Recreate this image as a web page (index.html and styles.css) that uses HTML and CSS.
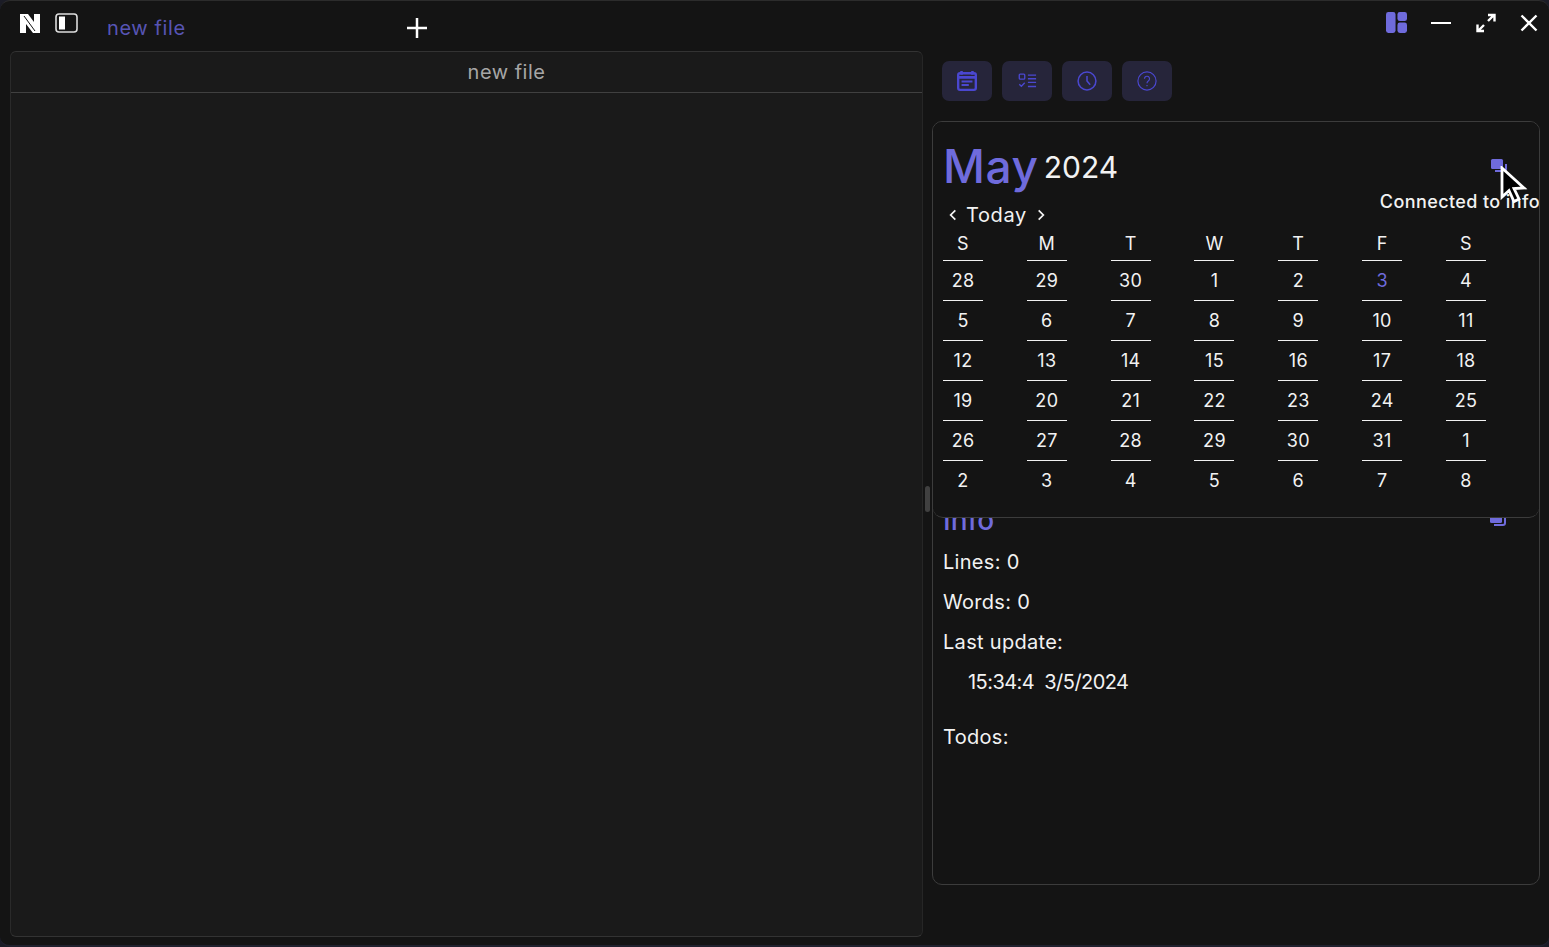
FILE: index.html
```html
<!DOCTYPE html>
<html lang="en">
<head>
<meta charset="utf-8">
<title>new file</title>
<link rel="stylesheet" href="styles.css">
</head>
<body>
<div class="app">
  <header class="titlebar">
    <svg class="logo" viewBox="0 0 20 19"><path fill="#fff" d="M0 0h8l6 8V0h6v19h-7L6 10v9H0z"/><path d="M4 2 15 17" stroke="#141414" stroke-width="1" fill="none"/></svg>
    <svg class="side" viewBox="0 0 23 20"><rect x="1" y="1" width="21" height="18" rx="3" fill="none" stroke="#ddd" stroke-width="1.600"/><rect x="4" y="3.500" width="6" height="13" fill="#fff"/></svg>
    <div class="tab">new file</div>
    <svg class="plus" viewBox="0 0 20 20"><path d="M10 0v20M0 10h20" stroke="#fff" stroke-width="2.500"/></svg>
    <div class="controls">
      <svg class="layout" viewBox="0 0 22 22"><rect width="10" height="22" rx="2.500" fill="#6f6bdc"/><rect x="12" width="10" height="9.500" rx="2.500" fill="#6f6bdc"/><rect x="12" y="11" width="10" height="11" rx="2.500" fill="#6f6bdc"/></svg>
      <svg class="ctl" viewBox="0 0 20 20"><path d="M0 10h20" stroke="#fff" stroke-width="2"/></svg>
      <svg class="ctl expand" viewBox="0 0 20 20"><path d="M2 18l6-6M12 8l6-6M12 2h6.500v6.500M1.500 11.500V18H8" stroke="#fff" stroke-width="2.400" fill="none"/></svg>
      <svg class="ctl close" viewBox="0 0 20 20"><path d="M2.500 2.500l15 15M17.500 2.500l-15 15" stroke="#fff" stroke-width="2.400"/></svg>
    </div>
  </header>
  <main class="main">
    <section class="editor">
      <div class="editor-head">new file</div>
    </section>
    <div class="gutter"><span class="handle"></span></div>
    <aside class="right">
      <nav class="tools">
        <button class="tool"><svg viewBox="0 0 22 22"><path d="M5 0v4M17 0v4" stroke-width="2.800"/><rect x="1.300" y="2.500" width="19.400" height="18.200" rx="2" stroke-width="2.600"/><path d="M1 7h20" stroke-width="3"/><path d="M5 11.500h12M5 15.500h8" stroke-width="2.200"/></svg></button>
        <button class="tool"><svg viewBox="0 0 22 22" stroke-width="1.500"><rect x="2.500" y="3.500" width="6" height="5.500" rx="1"/><path d="M12 4.500h9M12 8.500h9M12 12.500h9M12 17h9M2.500 14.500l2.300 2.300 3.700-3.800"/></svg></button>
        <button class="tool"><svg viewBox="0 0 22 22" stroke-width="1.700"><circle cx="11" cy="11" r="9.800"/><path d="M11 5.500V11l3.500 4"/></svg></button>
        <button class="tool"><svg viewBox="0 0 22 22" stroke-width="1.300"><circle cx="11" cy="11" r="10"/><path d="M8.200 8.500a2.800 2.800 0 1 1 4.200 2.500c-1 .6-1.400 1.200-1.400 2.500M11 15.300v1.500"/></svg></button>
      </nav>
      <div class="panel">
        <section class="calendar">
          <div class="cal-title">
            <span class="month">May</span>
            <span class="year">2024</span>
            <svg class="link" viewBox="0 0 18 18"><path d="M5 13h9a2 2 0 0 0 2-2V6" fill="none" stroke="#6f6bdc" stroke-width="2"/><rect x="1" y="1" width="12" height="10" rx="1.500" fill="#6f6bdc"/></svg>
          </div>
          <div class="cal-nav">
            <svg class="chev" viewBox="0 0 10 12"><path d="M7 2 3 6l4 4"/></svg>
            <span class="today">Today</span>
            <svg class="chev" viewBox="0 0 10 12"><path d="m3 2 4 4-4 4"/></svg>
          </div>
          <div class="grid">
            <div class="cell head">S</div><div class="cell head">M</div><div class="cell head">T</div><div class="cell head">W</div><div class="cell head">T</div><div class="cell head">F</div><div class="cell head">S</div>
            <div class="cell">28</div><div class="cell">29</div><div class="cell">30</div><div class="cell">1</div><div class="cell">2</div><div class="cell now">3</div><div class="cell">4</div>
            <div class="cell">5</div><div class="cell">6</div><div class="cell">7</div><div class="cell">8</div><div class="cell">9</div><div class="cell">10</div><div class="cell">11</div>
            <div class="cell">12</div><div class="cell">13</div><div class="cell">14</div><div class="cell">15</div><div class="cell">16</div><div class="cell">17</div><div class="cell">18</div>
            <div class="cell">19</div><div class="cell">20</div><div class="cell">21</div><div class="cell">22</div><div class="cell">23</div><div class="cell">24</div><div class="cell">25</div>
            <div class="cell">26</div><div class="cell">27</div><div class="cell">28</div><div class="cell">29</div><div class="cell">30</div><div class="cell">31</div><div class="cell">1</div>
            <div class="cell last">2</div><div class="cell last">3</div><div class="cell last">4</div><div class="cell last">5</div><div class="cell last">6</div><div class="cell last">7</div><div class="cell last">8</div>
          </div>
        </section>
        <section class="info">
          <div class="info-title"><span>Info</span><svg class="link" viewBox="0 0 18 18"><path d="M5 13h9a2 2 0 0 0 2-2V6" fill="none" stroke="#6f6bdc" stroke-width="2"/><rect x="1" y="1" width="12" height="10" rx="1.500" fill="#6f6bdc"/></svg></div>
          <p class="row">Lines: 0</p>
          <p class="row">Words: 0</p>
          <p class="row">Last update:</p>
          <p class="row stamp">15:34:4&nbsp; 3/5/2024</p>
          <p class="row todos">Todos:</p>
        </section>
        <div class="tooltip">Connected to info</div>
      </div>
      <svg class="cursor" viewBox="0 0 28 40"><path d="M2 2v29l7-6.500 5 11 5-2.500-5-10.500 10-.5z" fill="#000" stroke="#fff" stroke-width="2.800"/></svg>
    </aside>
  </main>
</div>
</body>
</html>
```
FILE: styles.css
```css
* { box-sizing: border-box; }
html, body { margin: 0; height: 100%; background: #1b1c26; overflow: hidden; }
body { font-family: Inter, "Liberation Sans", sans-serif; color: #f2f2f2; }
.app { width: 1549px; height: 947px; background: #141414; border-radius: 10px; border-top: 1px solid #2c2c2c; border-bottom: 2px solid #20212e; display: flex; flex-direction: column; overflow: hidden; }
.titlebar { height: 50px; flex: none; display: flex; align-items: flex-start; position: relative; }
.logo { width: 20px; height: 19px; margin: 13px 0 0 20px; }
.side { width: 23px; height: 20px; margin: 12px 0 0 15px; }
.tab { width: 298px; margin: 14px 0 0 29px; font-size: 20px; line-height: 26px; color: #5754b4; letter-spacing: .6px; }
.plus { width: 20px; height: 20px; margin: 17px 0 0 2px; }
.controls { margin-left: auto; display: flex; align-items: flex-start; gap: 25px; padding: 11px 10px 0 0; }
.layout { width: 21px; height: 21px; margin-right: -1px; }
.ctl { width: 20px; height: 20px; margin-top: 1px; }
.expand { margin-right: -2px; }
.main { flex: 1; display: flex; min-height: 0; }
.editor { width: 913px; margin: 0 0 8px 10px; background: #1a1a1a; border: 1px solid #333; border-left-color: #2a2a2a; border-right-color: #262626; border-radius: 6px; flex: none; }
.editor-head { height: 41px; border-bottom: 1px solid #404040; padding-left: 80px; text-align: center; font-size: 20px; line-height: 40px; color: #a6a6a6; letter-spacing: .5px; }
.gutter { width: 9px; flex: none; display: flex; align-items: center; justify-content: center; padding-top: 2px; }
.handle { width: 5px; height: 26px; border-radius: 3px; background: #404040; }
.right { flex: 1; position: relative; padding: 10px 9px 0 0; }
.tools { display: flex; gap: 10px; padding-left: 10px; }
.tool { width: 50px; height: 40px; border: 0; border-radius: 7px; background: #26253a; padding: 0; display: flex; align-items: center; justify-content: center; }
.tool svg { width: 20px; height: 20px; fill: none; stroke: #4a47cf; }
.panel { position: relative; margin-top: 20px; height: 764px; border: 1px solid #3c3c3c; border-radius: 10px; overflow: hidden; }
.calendar { position: relative; z-index: 1; height: 396px; padding: 10px 10px 0; background: #141414; border-bottom: 1px solid #3c3c3c; border-radius: 0 0 10px 10px; }
.cal-title { display: flex; align-items: flex-start; height: 60px; padding-top: 4px; }
.month { font-size: 46px; font-weight: 500; line-height: 60px; color: #6f6bdc; letter-spacing: .6px; }
.year { font-size: 30px; line-height: 40px; margin: 11px 0 0 5px; }
.cal-title .link { margin-left: auto; margin-right: 21px; margin-top: 22px; }
.link { width: 18px; height: 18px; flex: none; }
.cal-nav { display: flex; align-items: center; gap: 3px; height: 24px; margin-top: 11px; padding-left: 4px; }
.chev { width: 12px; height: 14px; fill: none; stroke: #f2f2f2; stroke-width: 1.500; }
.today { font-size: 20px; line-height: 24px; padding: 0 5px 0 4px; letter-spacing: .6px; }
.grid { display: grid; grid-template-columns: repeat(7, 40px); justify-content: space-between; width: 543px; grid-auto-rows: 40px; margin-top: -6px; }
.cell { height: 40px; display: flex; align-items: center; justify-content: center; border-bottom: 1px solid #f2f2f2; font-size: 18px; padding-bottom: 1px; letter-spacing: .3px; }
.grid .head { height: 28px; margin-top: 12px; padding-bottom: 7px; }
.now { color: #6f6bdc; }
.grid .last { border-bottom: 0; }
.info { margin-top: -15px; padding: 0 10px; }
.info-title { display: flex; justify-content: space-between; height: 40px; font-size: 28px; font-weight: 500; color: #6f6bdc; line-height: 35px; padding-right: 22px; }
.info-title .link { margin-top: 9px; }
.row { margin: 0; height: 40px; font-size: 20px; line-height: 38px; letter-spacing: .3px; }
.stamp { padding-left: 25px; letter-spacing: -.55px; }
.todos { margin-top: 15px; }
.tooltip { position: absolute; z-index: 2; right: -1px; top: 63px; height: 34px; width: 166px; background: #141414; font-size: 18px; font-weight: 500; line-height: 34px; text-align: right; white-space: nowrap; letter-spacing: .4px; }
.cursor { position: absolute; z-index: 3; left: 568px; top: 115px; width: 28px; height: 40px; }
```
